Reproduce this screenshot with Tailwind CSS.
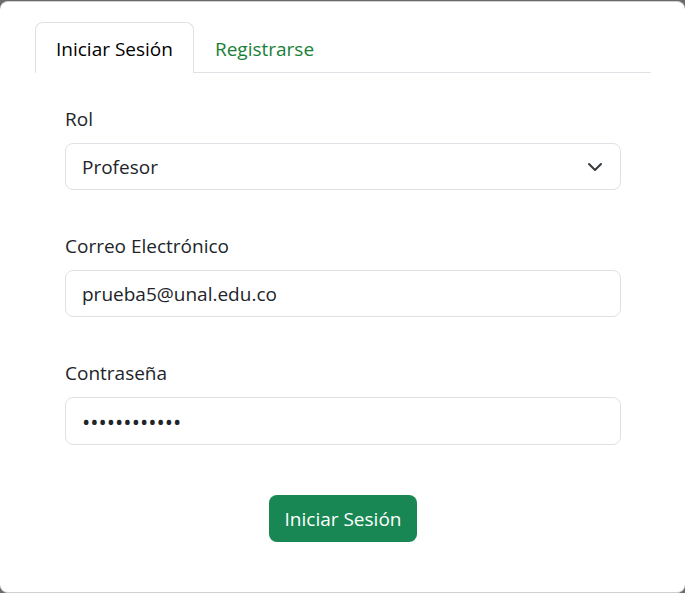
<!DOCTYPE html>
<html lang="es">
<head>
<meta charset="utf-8">
<meta name="viewport" content="width=device-width, initial-scale=1">
<title>Iniciar Sesión</title>
<script src="https://cdn.jsdelivr.net/npm/@tailwindcss/browser@4"></script>
</head>
<body class="flex min-h-screen flex-col bg-[#6b6b6b] pt-px font-['Open_Sans','Noto_Sans',sans-serif] text-[19px] leading-7 text-[#212529]">
<main class="grow rounded-lg border-y border-[#cfcfcf] bg-white pt-5 pr-[34px] pb-12 pl-[35px]">
  <nav class="flex border-b border-[#dee2e6]">
    <a href="#login" aria-current="page" class="-mb-px rounded-t-lg border border-b-0 border-[#dee2e6] bg-white px-5 pt-3 pb-2.5 text-black">Iniciar Sesión</a>
    <a href="#registro" class="px-[21px] pt-[13px] pb-2 text-[#198038]">Registrarse</a>
  </nav>
  <form class="flex flex-col px-[30px] pt-8">
    <label for="rol" class="mb-2.5">Rol</label>
    <div class="relative mb-[42px]">
      <select id="rol" class="block h-[47px] w-full appearance-none rounded-lg border border-[#dee2e6] bg-white px-4"><option>Profesor</option></select>
      <svg class="pointer-events-none absolute top-1/2 right-[18px] size-4 -translate-y-1/2" viewBox="0 0 16 16" fill="none" stroke="#343a40" stroke-width="2" stroke-linecap="round" stroke-linejoin="round"><path d="m2 5 6 6 6-6"/></svg>
    </div>
    <label for="correo" class="mb-2.5">Correo Electrónico</label>
    <input id="correo" type="email" value="prueba5@unal.edu.co" class="mb-[42px] h-[47px] w-full rounded-lg border border-[#dee2e6] px-4">
    <label for="clave" class="mb-2.5">Contraseña</label>
    <input id="clave" type="password" value="contrasena12" class="mb-[50px] h-[48px] w-full rounded-lg border border-[#dee2e6] px-4 text-[22px]">
    <button type="submit" class="h-[47px] self-center rounded-lg bg-[#198754] px-4 text-white">Iniciar Sesión</button>
  </form>
</main>
</body>
</html>
